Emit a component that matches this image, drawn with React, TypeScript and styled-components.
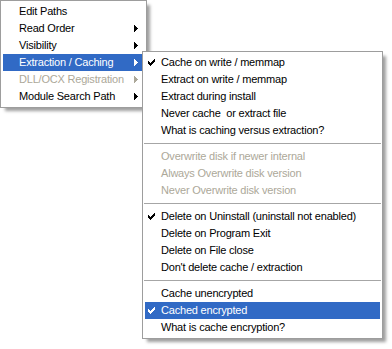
import { FC } from "react";
import styled, { createGlobalStyle } from "styled-components";

type Entry =
  | { kind: "item"; label: string; checked?: boolean; disabled?: boolean; active?: boolean; sub?: boolean }
  | { kind: "sep" };

const cachingMenu: Entry[] = [
  { kind: "item", label: "Cache on write / memmap", checked: true },
  { kind: "item", label: "Extract on write / memmap" },
  { kind: "item", label: "Extract during install" },
  { kind: "item", label: "Never cache  or extract file" },
  { kind: "item", label: "What is caching versus extraction?" },
  { kind: "sep" },
  { kind: "item", label: "Overwrite disk if newer internal", disabled: true },
  { kind: "item", label: "Always Overwrite disk version", disabled: true },
  { kind: "item", label: "Never Overwrite disk version", disabled: true },
  { kind: "sep" },
  { kind: "item", label: "Delete on Uninstall (uninstall not enabled)", checked: true },
  { kind: "item", label: "Delete on Program Exit" },
  { kind: "item", label: "Delete on File close" },
  { kind: "item", label: "Don't delete cache / extraction" },
  { kind: "sep" },
  { kind: "item", label: "Cache unencrypted" },
  { kind: "item", label: "Cached encrypted", checked: true, active: true },
  { kind: "item", label: "What is cache encryption?" },
];

const mainMenu = [
  { label: "Edit Paths" },
  { label: "Read Order", sub: true },
  { label: "Visibility", sub: true },
  { label: "Extraction / Caching", sub: true, active: true, open: true },
  { label: "DLL/OCX Registration", sub: true, disabled: true },
  { label: "Module Search Path", sub: true },
];

const CheckIcon: FC = () => (
  <svg width="7" height="7" viewBox="0 0 7 7" shapeRendering="crispEdges">
    <path
      fill="currentColor"
      d="M6 0h1v1h-1z M5 1h2v1h-2z M0 2h1v1h-1z M4 2h3v1h-3z M0 3h2v1h-2z M3 3h3v1h-3z M0 4h5v1h-5z M1 5h3v1h-3z M2 6h1v1h-1z"
    />
  </svg>
);

const ArrowIcon: FC = () => (
  <svg width="4" height="7" viewBox="0 0 4 7" shapeRendering="crispEdges">
    <path fill="currentColor" d="M0 0h1v1h1v1h1v1h1v1h-1v1h-1v1h-1v1h-1z" />
  </svg>
);

const SubMenu: FC<{ entries: Entry[] }> = ({ entries }) => (
  <Panel $width={241} $sub>
    {entries.map((e, i) =>
      e.kind === "sep" ? (
        <Separator key={i} />
      ) : (
        <Item key={i} $active={e.active} $disabled={e.disabled}>
          <Gutter>{e.checked && <CheckIcon />}</Gutter>
          <Label>{e.label}</Label>
        </Item>
      )
    )}
  </Panel>
);

const App: FC = () => {
  return (
    <>
      <GlobalStyle />
      <Stage>
        <Panel $width={147}>
          {mainMenu.map((m) => (
            <Item key={m.label} $active={m.active} $disabled={m.disabled}>
              <Gutter />
              <Label>{m.label}</Label>
              <ArrowSlot>{m.sub && <ArrowIcon />}</ArrowSlot>
              {m.open && <SubMenu entries={cachingMenu} />}
            </Item>
          ))}
        </Panel>
      </Stage>
    </>
  );
};

export default App;

const GlobalStyle = createGlobalStyle`
  html, body {
    margin: 0;
    padding: 0;
    background: #ffffff;
  }
  body {
    font-family: "Liberation Sans", Arial, sans-serif;
    font-size: 11px;
  }
`;

const Stage = styled.div`
  width: 392px;
  height: 349px;
  background: #ffffff;
  overflow: hidden;
`;

const Panel = styled.div<{ $width: number; $sub?: boolean }>`
  box-sizing: border-box;
  width: ${({ $width }) => $width}px;
  padding: 2px;
  background: #ffffff;
  border: 1px solid #9d9d9d;
  box-shadow: 4px 4px 3px -1px rgba(0, 0, 0, 0.38);
  display: flex;
  flex-direction: column;
  color: #000000;
  ${({ $sub }) =>
    $sub &&
    `
    position: absolute;
    left: calc(100% - 2px);
    top: -3px;
    z-index: 2;
  `}
`;

const Item = styled.div<{ $active?: boolean; $disabled?: boolean }>`
  position: relative;
  height: 17px;
  display: flex;
  align-items: center;
  letter-spacing: -0.2px;
  white-space: pre;
  background: ${({ $active }) => ($active ? "#316ac5" : "transparent")};
  color: ${({ $active, $disabled }) =>
    $active ? "#ffffff" : $disabled ? "#aca899" : "#000000"};
`;

const Gutter = styled.span`
  width: 16px;
  flex: none;
  display: flex;
  align-items: center;
  padding-left: 3px;
  box-sizing: border-box;
`;

const Label = styled.span`
  flex: 1;
  line-height: 17px;
`;

const ArrowSlot = styled.span`
  width: 10px;
  flex: none;
  display: flex;
  align-items: center;
`;

const Separator = styled.div`
  height: 9px;
  display: flex;
  align-items: center;
  margin: 0 -1px;

  &::after {
    content: "";
    flex: 1;
    height: 1px;
    background: #a6a6a6;
  }
`;
